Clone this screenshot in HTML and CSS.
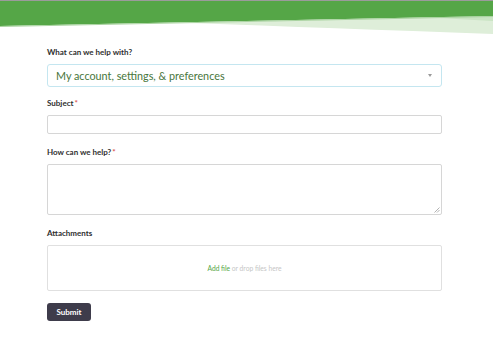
FILE: index.html
```html
<!DOCTYPE html>
<html lang="en">
<head>
<meta charset="utf-8">
<title>Support request</title>
<link rel="stylesheet" href="styles.css">
</head>
<body>
<header class="banner">
  <svg class="banner-art" viewBox="0 0 493 36" preserveAspectRatio="none" aria-hidden="true">
    <rect x="0" y="0" width="493" height="1" fill="#9b9b9b"/>
    <path d="M190 23 Q 330 28 493 34 L493 16 Z" fill="#deeed9"/>
    <path d="M420 17 L493 16 L493 21 Z" fill="#c9e4c3"/>
    <path d="M0 1 L493 1 L493 16 L0 26 Z" fill="#55a647"/>
    <path d="M0 26 L493 16 L493 17 L0 27 Z" fill="#a9d3a0"/>
  </svg>
</header>
<main class="form">
  <div class="field first">
    <label class="label">What can we help with?</label>
    <div class="select">
      <span class="select-text">My account, settings, &amp; preferences</span>
      <span class="caret"></span>
    </div>
  </div>
  <div class="field second">
    <label class="label">Subject<span class="req">*</span></label>
    <div class="input"></div>
  </div>
  <div class="field">
    <label class="label">How can we help?<span class="req">*</span></label>
    <div class="textarea">
      <svg class="grip" viewBox="0 0 6 6" aria-hidden="true"><path d="M5.5 0.5 L0.5 5.5 M5.5 3 L3 5.5" stroke="#a0a0a0" stroke-width="0.8"/></svg>
    </div>
  </div>
  <div class="field">
    <label class="label">Attachments</label>
    <div class="dropzone"><span class="add">Add file</span>&nbsp;or drop files here</div>
  </div>
  <button class="submit" type="button">Submit</button>
</main>
</body>
</html>
```
FILE: styles.css
```css
* { box-sizing: border-box; }
html, body { margin: 0; padding: 0; background: #fff; }
body { font-family: Lato, "Open Sans", "Liberation Sans", sans-serif; color: #333; }
.banner { height: 36px; }
.banner-art { display: block; width: 493px; height: 36px; }
.form { display: flex; flex-direction: column; padding: 0 0 0 47px; width: 442px; }
.field { display: flex; flex-direction: column; margin-top: 13px; }
.field.first { margin-top: 11px; }
.field.second { margin-top: 11px; }
.label { font-size: 8px; font-weight: 700; line-height: 10px; color: #2f2f2f; margin-bottom: 7px; }
.req { color: #d9534f; margin-left: 1px; }
.select { height: 23px; border: 1px solid #c4e6f0; border-radius: 3px; display: flex; align-items: center; justify-content: space-between; padding: 0 9px 0 8px; }
.select-text { font-size: 10.8px; color: #48763c; }
.caret { width: 0; height: 0; border-left: 2px solid transparent; border-right: 2px solid transparent; border-top: 3px solid #9a9a9a; margin-top: -1px; }
.input { height: 19px; border: 1px solid #d6d6d6; border-radius: 2px; }
.textarea { height: 51px; border: 1px solid #d6d6d6; border-radius: 2px; display: flex; justify-content: flex-end; align-items: flex-end; padding: 1px; }
.grip { width: 6px; height: 6px; display: block; }
.dropzone { height: 46px; border: 1px solid #e0e0e0; border-radius: 2px; display: flex; align-items: center; justify-content: center; font-size: 6.7px; color: #c6c6c6; }
.add { color: #55a647; }
.submit { align-self: flex-start; margin-top: 12px; width: 44px; height: 18px; border: 0; border-radius: 3px; background: #3e3c4b; color: #fff; font-family: Lato, "Open Sans", "Liberation Sans", sans-serif; font-weight: 700; font-size: 8px; padding: 0; }
```
